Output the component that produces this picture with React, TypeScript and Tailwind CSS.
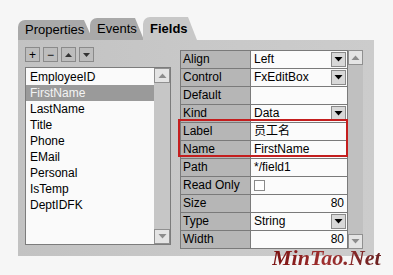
import { ReactNode } from "react";

const fields = [
  "EmployeeID",
  "FirstName",
  "LastName",
  "Title",
  "Phone",
  "EMail",
  "Personal",
  "IsTemp",
  "DeptIDFK",
];

type Prop = {
  name: string;
  value?: string;
  align?: "left" | "right";
  dropdown?: boolean;
  checkbox?: boolean;
};

const props: Prop[] = [
  { name: "Align", value: "Left", dropdown: true },
  { name: "Control", value: "FxEditBox", dropdown: true },
  { name: "Default", value: "" },
  { name: "Kind", value: "Data", dropdown: true },
  { name: "Label", value: "员工名" },
  { name: "Name", value: "FirstName" },
  { name: "Path", value: "*/field1" },
  { name: "Read Only", checkbox: true },
  { name: "Size", value: "80", align: "right" },
  { name: "Type", value: "String", dropdown: true },
  { name: "Width", value: "80", align: "right" },
];

function Tab({
  label,
  active,
  className,
}: {
  label: string;
  active?: boolean;
  className: string;
}) {
  return (
    <div
      className={`relative flex items-center rounded-tl-[7px] pl-[7px] text-[13px] text-black [clip-path:polygon(0_0,calc(100%-9px)_0,100%_100%,0_100%)] ${
        active ? "z-20 bg-[#c8c8c8] font-bold" : "bg-[#a9a9a9]"
      } ${className}`}
    >
      {label}
    </div>
  );
}

function ToolButton({ children }: { children: ReactNode }) {
  return (
    <div className="flex h-[15px] w-[15px] items-center justify-center border border-[#8a8a8a] bg-[#bdbdbd] text-[12px] leading-none text-black">
      {children}
    </div>
  );
}

function Arrow({ up, dark }: { up?: boolean; dark?: boolean }) {
  return (
    <svg width="9" height="5" viewBox="0 0 9 5">
      <path
        d={up ? "M0.5 5 L4.5 0.5 L8.5 5 Z" : "M0.5 0 L4.5 4.5 L8.5 0 Z"}
        fill={dark ? "#000" : "#8c8c8c"}
      />
    </svg>
  );
}

function ScrollButton({ up }: { up?: boolean }) {
  return (
    <div className="flex h-[15px] w-full items-center justify-center border border-[#909090] bg-[#e4e4e4]">
      <Arrow up={up} />
    </div>
  );
}

export default function App() {
  return (
    <div className="relative h-[275px] w-[393px] overflow-hidden bg-[#f6f6f6] pl-[18px] pt-[17px] font-['Liberation_Sans','Noto_Sans_CJK_SC',sans-serif] text-[12px]">
      <div className="flex h-[23px] items-end">
        <Tab label="Properties" className="z-0 h-[20px] w-[75px]" />
        <Tab label="Events" className="z-10 -ml-[3px] h-[22px] w-[54px]" />
        <Tab label="Fields" active className="-ml-[1px] h-[23px] w-[54px]" />
      </div>

      <div className="flex h-[216px] w-[356px] gap-[9px] bg-gradient-to-r from-[#c2c2c2] via-[#c8c8c8] to-[#cccccc] pl-[7px] pt-[7px]">
        <div className="flex flex-col">
          <div className="flex gap-[3px]">
            <ToolButton>+</ToolButton>
            <ToolButton>−</ToolButton>
            <ToolButton>
              <svg width="7" height="4" viewBox="0 0 7 4">
                <path d="M0 4 L3.5 0 L7 4 Z" fill="#333" />
              </svg>
            </ToolButton>
            <ToolButton>
              <svg width="7" height="4" viewBox="0 0 7 4">
                <path d="M0 0 L3.5 4 L7 0 Z" fill="#333" />
              </svg>
            </ToolButton>
          </div>
          <div className="mt-[5px] flex h-[178px] w-[146px] border border-[#7c7c7c] bg-[#fafafa]">
            <div className="flex-1 pt-[1px]">
              {fields.map((f) => (
                <div
                  key={f}
                  className={`h-[16px] pl-[4px] leading-[16px] ${
                    f === "FirstName"
                      ? "bg-[#9a9a9a] text-[#f4f4f4]"
                      : "text-black"
                  }`}
                >
                  {f}
                </div>
              ))}
            </div>
            <div className="flex w-[16px] flex-col justify-between bg-[#c6c6c6]">
              <ScrollButton up />
              <ScrollButton />
            </div>
          </div>
        </div>

        <div className="mt-[3px] flex h-[199px]">
          <div className="grid grid-cols-[69px_96px] gap-px border border-[#7a7a7a] bg-[#7a7a7a]">
            {props.map((p) => (
              <div key={p.name} className="contents">
                <div className="h-[17px] bg-[#b6b6b6] pl-[2px] leading-[17px] text-black">
                  {p.name}
                </div>
                <div className="flex h-[17px] items-center bg-[#fbfbfb] pl-[3px] text-black">
                  {p.checkbox ? (
                    <div className="h-[11px] w-[11px] border border-[#8a8a8a] bg-white" />
                  ) : (
                    <span
                      className={`flex-1 leading-[17px] ${
                        p.align === "right" ? "pr-[3px] text-right" : ""
                      }`}
                    >
                      {p.value}
                    </span>
                  )}
                  {p.dropdown && (
                    <div className="mr-[1px] flex h-[15px] w-[15px] items-center justify-center border border-[#8a8a8a] bg-[#d8d8d8]">
                      <Arrow dark />
                    </div>
                  )}
                </div>
              </div>
            ))}
          </div>
          <div className="flex w-[15px] flex-col justify-between bg-[#c0c0c0]">
            <ScrollButton up />
            <ScrollButton />
          </div>
        </div>
      </div>

      <div className="absolute left-[178px] top-[119px] h-[38px] w-[170px] border-2 border-[#c41e1e]" />

      <div className="absolute left-[272px] top-[248px] bg-gradient-to-r from-[#7a1010] via-[#a03030] to-[#6a2020] bg-clip-text font-['Liberation_Serif',serif] text-[22px] font-bold italic leading-[20px] text-transparent">
        MinTao.Net
      </div>
    </div>
  );
}
